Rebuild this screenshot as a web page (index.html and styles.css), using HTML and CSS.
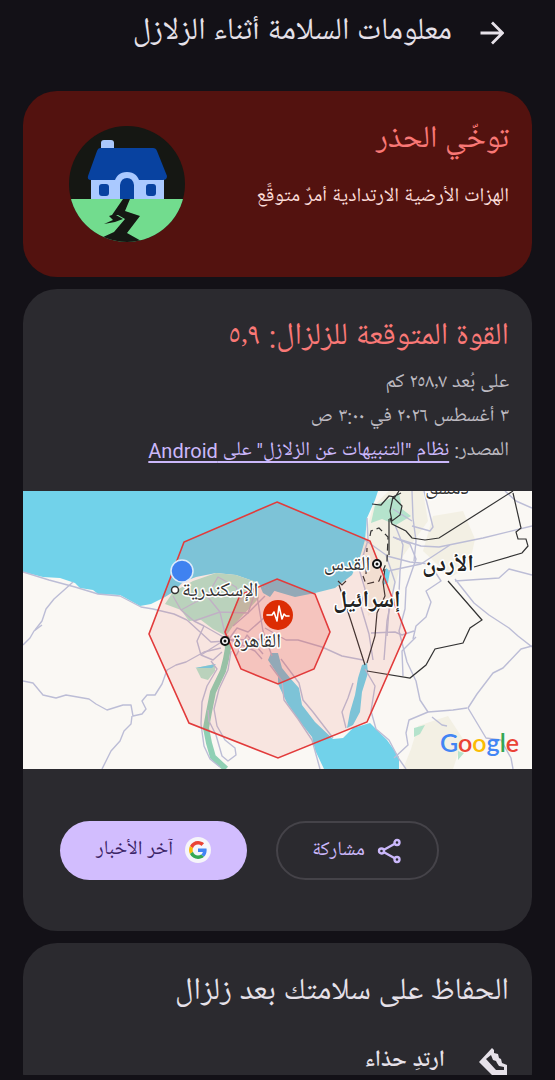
FILE: index.html
```
<!DOCTYPE html>
<html lang="ar" dir="rtl">
<head>
    <meta charset="UTF-8">
    <meta name="viewport" content="width=device-width, initial-scale=1.0">
    <title>معلومات السلامة أثناء الزلازل</title>
    <link rel="stylesheet" href="styles.css">
</head>
<body>
    <header class="top-bar">
        <button class="back-button" aria-label="رجوع">
            <svg width="24" height="24" viewBox="0 0 24 24" fill="none" stroke="currentColor" stroke-width="2.8"><path d="M0.500 12H22M12 1.500L22.500 12L12 22.500"/></svg>
        </button>
        <h1>معلومات السلامة أثناء الزلازل</h1>
    </header>

    <main class="content">
        <section class="card warning">
            <div class="warning-text">
                <h2>توخّي الحذر</h2>
                <p>الهزات الأرضية الارتدادية أمرٌ متوقَّع</p>
            </div>
            <svg class="house" viewBox="0 0 116 116">
                <clipPath id="round"><circle cx="58" cy="58" r="58"/></clipPath>
                <g clip-path="url(#round)">
                    <rect width="116" height="116" fill="#151713"/>
                    <rect y="73" width="116" height="43" fill="#72dc8e"/>
                    <path d="M54 73L43 89L40 90L44 94L35 98L46 96L54 93L47 89L49 89L56 93L45 106L32 112V116H74L58 107L71 90L56 85L61 73Z" fill="#151713"/>
                    <rect x="32" y="14" width="13" height="14" rx="3" fill="#aac7fb"/>
                    <rect x="22" y="50" width="73" height="23" fill="#aac9ff"/>
                    <path d="M31 22H84Q87 22 88 25L98 50Q98 54 94 54H22Q18 54 19 50L28 25Q29 22 31 22Z" fill="#0842a0"/>
                    <path d="M45 73V58Q47 46 58 46Q69 46 71 58V73Z" fill="#aac9ff"/>
                    <path d="M51 73V59Q52 52 58 52Q64 52 65 59V73Z" fill="#0842a0"/>
                    <rect x="30" y="58" width="10" height="12" rx="3" fill="#0842a0"/>
                    <rect x="77" y="58" width="10" height="12" rx="3" fill="#0842a0"/>
                </g>
            </svg>
        </section>

        <section class="card quake">
            <div class="details">
                <h2>القوة المتوقعة للزلزال: ٥٫٩</h2>
                <p>على بُعد ٢٥٨٫٧ كم</p>
                <p>٣ أغسطس ٢٠٢٦ في ٣:٠٠ ص</p>
                <p>المصدر: <a href="#">نظام "التنبيهات عن الزلازل" على Android</a></p>
            </div>

            <svg class="map" viewBox="0 0 509 278">
                <rect width="509" height="278" fill="#faf8f4"/>
                <!-- terrain -->
                <path class="sand" d="M410 25L440 20L452 48L446 76L428 86L400 60ZM395 235L425 225L440 248L430 278H380L388 258Z"/>
                <path class="sand" d="M338 60L350 15L366 0H400L405 30L380 65L368 110L345 125Z"/>
                <!-- sea -->
                <path class="sea" d="M0 0V81L20 86L37 87L52 92L57 97L70 99L75 103L97 104L117 115L128 113L142 106L150 101L160 91L173 86L193 82L213 84L233 91L240 96L255 101L272 106L292 102L312 97L329 84L337 66L342 49L344 27L352 9L355 0Z"/>
                <!-- farmland along the Nile -->
                <path class="green" d="M142 113L150 101L170 90L193 82L213 84L233 91L236 107L221 123L210 135L203 145L190 138L178 129L166 130L158 119Z"/>
                <path class="green" d="M173 177L192 173V180L185 189L178 187Z"/>
                <path class="green" d="M352 14L366 8L376 2L379 18L388 25L373 34L359 28L348 32ZM391 237L402 234L397 243L391 246ZM435 260L441 262L435 269Z"/>
                <path class="river" d="M203 145L205 157L203 168L200 180L190 201L186 221L183 237L186 252L190 266L203 278"/>
                <path class="lake" d="M172 177L193 173L189 177Z"/>
                <path class="lake" d="M237 95L252 99L247 106L240 102Z"/>
                <!-- gulfs -->
                <path class="sea" d="M248 162L245 169L255 184L255 193L264 212L277 231L289 246L292 259L301 278H376V266L364 249L347 232L330 237L320 247L310 248L292 231L279 214L276 197L267 187L259 177L255 162Z"/>
                <path class="sea" d="M344 172L345 182L339 201L337 221L330 234L324 237L327 221L332 204L335 187L339 174ZM363 77L367 80L365 92L360 94Z"/>

                <!-- roads -->
                <g class="roads">
                    <path d="M0 81L26 89L52 96L75 103L97 105L118 116L130 118L151 123L164 129"/>
                    <path d="M12 139L19 130L23 118L31 108L40 100L50 91"/>
                    <path d="M0 154L7 147L11 140L19 134"/>
                    <path d="M0 190L10 192L20 204L33 207L43 204L66 208L73 213L84 219L100 214L108 214L110 225L119 223L123 218L119 210L124 204L132 204L139 193L144 179L153 174L163 171L181 161L198 157"/>
                    <path d="M109 225L108 233L101 240L97 250L88 260L79 278"/>
                    <path d="M150 105L158 119L171 130L181 135L202 147M164 129L188 151L203 150"/>
                    <path d="M181 135L174 150L178 164L190 169L199 161M178 164L200 150"/>
                    <path d="M188 170L194 178L184 195L179 211L178 233L181 255L187 268L197 276"/>
                    <path d="M208 160L205 179L196 198L191 218L194 235L202 249L212 257L213 264L205 270L199 265L193 244L186 230L185 219"/>
                    <path d="M158 119L184 105L195 86L213 96L218 108M184 105L197 121L225 122L242 105M171 130L197 121L203 147"/>
                    <path d="M206 148L214 137L225 141L242 126L252 111M210 135L225 122L233 99L240 140L249 165M206 148L232 160L239 168M207 149L250 148"/>
                    <path d="M213 165L224 144L240 163M242 137L263 149L275 149L299 156L319 165L340 169"/>
                    <path d="M247 174L259 190L261 209L275 228L289 249L297 278M258 168L276 192L280 209L290 221L310 247"/>
                    <path d="M342 178L352 195L348 220L353 238L366 249L376 268L383 278M323 237L319 221L325 207L330 192"/>
                    <path d="M344 27L345 49L336 78L342 98L338 116L346 143L350 169M342 49L363 64L372 91L364 130L361 169"/>
                    <path d="M372 34L380 54L377 80L376 102L366 118L364 145M370 46L387 53L393 68L383 97L382 118L376 140L384 171L393 190L397 209L405 221L430 219L444 217"/>
                    <path d="M364 65L387 71L407 73L418 90L403 100L408 111L403 126L393 135L390 148"/>
                    <path d="M372 47L398 55L416 56L460 47L509 35M365 80L398 73L427 54"/>
                    <path d="M389 0L390 27L393 50L391 70M401 0L410 36L407 40L389 35M370 18L389 30"/>
                    <path d="M432 88L451 112L466 124L486 137L495 145L509 156M432 90L476 87L486 78L509 84"/>
                    <path d="M509 155L498 158L480 177L470 182L454 203L445 217L463 247L478 249L488 267L490 278"/>
                    <path d="M405 221L386 229L383 242L385 254L371 267M409 226L419 234L424 235"/>
                    <path d="M348 142L372 141L379 144L391 140M482 0L493 10L509 17M380 185L379 160L393 146"/>
                </g>

                <!-- borders -->
                <g class="borders">
                    <path d="M349 13L358 14L366 5L372 6L376 0M370 6L379 15L377 24L369 30L367 20L370 6L378 2M367 27L369 33L383 40L389 47L402 49L416 47L490 0M490 2L498 37L493 41L495 48L503 48L505 55L499 62L451 76"/>
                    <path d="M425 90L459 129L447 137L440 152L412 158L403 174L387 187L344 180M316 94L319 103L328 130L342 174M366 28L366 64"/>
                    <path d="M362 78L360 91L362 105L354 122L352 145L344 172"/>
                    <path stroke-dasharray="7 4" d="M347 45L348 40L356 37L365 46L364 70L356 90L343 93L340 85M343 83L344 57"/>
                    <path d="M315 90L319 94L323 90"/>
                </g>

                <!-- shaking zones -->
                <path class="zone" d="M254 11L347 50L383 142L344 231L255 267L166 232L126 143L161 51Z"/>
                <path class="zone zone-inner" d="M254 88L292 103L307 141L291 178L255 193L218 178L202 141L217 104Z"/>

                <!-- places -->
                <text class="city" x="424" y="6">دمشق</text>
                <text class="country" x="425" y="83">الأردن</text>
                <text class="country" x="344" y="119">إسرائيل</text>
                <text class="city" x="324" y="82">القدس</text>
                <text class="city" x="197" y="108">الإسكندرية</text>
                <text class="city" x="234" y="159">القاهرة</text>
                <circle cx="152" cy="99" r="3.500" fill="#fff" stroke="#333" stroke-width="1.500"/>
                <circle cx="202" cy="150" r="4" fill="#fff" stroke="#111" stroke-width="2"/>
                <circle cx="202" cy="150" r="1.500" fill="#111"/>
                <circle cx="354" cy="73" r="4" fill="#fff" stroke="#111" stroke-width="2"/>
                <circle cx="354" cy="73" r="1.500" fill="#111"/>

                <circle cx="159" cy="80" r="11" fill="#3f82f0" stroke="#dcebfb" stroke-width="1.500"/>

                <circle cx="255" cy="124" r="15" fill="#dc2c04"/>
                <path d="M244 124H249L251 121L254 130L256 115L259 128L261 123L263 125H266" fill="none" stroke="#fff" stroke-width="1.600" stroke-linejoin="round" stroke-linecap="round"/>

                <text class="google" x="417" y="261"><tspan fill="#4285f4">G</tspan><tspan fill="#ea4335">o</tspan><tspan fill="#fbbc05">o</tspan><tspan fill="#4285f4">g</tspan><tspan fill="#34a853">l</tspan><tspan fill="#ea4335">e</tspan></text>
            </svg>

            <div class="actions">
                <button class="share">
                    <svg width="26" height="26" viewBox="0 0 26 26" fill="none" stroke="currentColor" stroke-width="2.400"><circle cx="4.500" cy="13" r="2.500"/><circle cx="20" cy="4.500" r="2.500"/><circle cx="20" cy="21.500" r="2.500"/><path d="M7 11.700L17.800 5.800M7 14.300L17.800 20.200"/></svg>
                    مشاركة
                </button>
                <button class="news">
                    <svg width="26" height="26" viewBox="0 0 26 26">
                        <circle cx="13" cy="13" r="13" fill="#f6f5fa"/>
                        <g transform="translate(4 4) scale(.375)">
                            <path fill="#ea4335" d="M24 9.500c3.540 0 6.710 1.220 9.210 3.600l6.850-6.850C35.900 2.380 30.470 0 24 0 14.620 0 6.510 5.380 2.560 13.220l7.980 6.190C12.430 13.720 17.740 9.500 24 9.500z"/>
                            <path fill="#4285f4" d="M46.980 24.550c0-1.570-.15-3.090-.38-4.550H24v9.020h12.940c-.58 2.960-2.260 5.480-4.780 7.180l7.730 6c4.510-4.180 7.090-10.360 7.090-17.650z"/>
                            <path fill="#fbbc05" d="M10.530 28.590c-.48-1.450-.76-2.990-.76-4.590s.27-3.140.76-4.590l-7.980-6.190C.92 16.460 0 20.120 0 24c0 3.880.92 7.540 2.560 10.780l7.970-6.190z"/>
                            <path fill="#34a853" d="M24 48c6.480 0 11.930-2.130 15.890-5.810l-7.730-6c-2.150 1.450-4.920 2.300-8.160 2.300-6.260 0-11.570-4.220-13.470-9.910l-7.980 6.190C6.510 42.620 14.620 48 24 48z"/>
                        </g>
                    </svg>
                    آخر الأخبار
                </button>
            </div>
        </section>

        <section class="card safety">
            <h2>الحفاظ على سلامتك بعد زلزال</h2>
            <ul>
                <li>
                    <svg width="28" height="28" viewBox="0 0 28 28"><path fill="currentColor" fill-rule="evenodd" d="M13 0L15 2V5L19 6L20 10L22 11L23 15L28 17V28H14L0 14ZM7 11L17 22H25V19L20 18L18 15L17 13L14 12L12 7Z"/></svg>
                    ارتدِ حذاء
                </li>
            </ul>
        </section>
    </main>
</body>
</html>
```
FILE: styles.css
```
*,
*::before,
*::after {
    box-sizing: border-box;
}

:root {
    --clr-page: #131117;
    --clr-card: #2b2a2f;
    --clr-warning: #53120f;
    --clr-red: #f97876;
    --clr-text: #e6e1e9;
    --clr-muted: #bdbac1;
    --clr-purple: #cbb8fb;

    --ff-body: Roboto, "Noto Naskh Arabic UI", "Noto Naskh Arabic", "Noto Sans Arabic", sans-serif;
}

body {
    display: flex;
    flex-direction: column;
    height: 100vh;
    margin: 0;
    padding: 0 23px 5px;
    overflow: hidden;
    background: var(--clr-page);
    color: var(--clr-text);
    font-family: var(--ff-body);
}

h1,
h2,
p,
ul {
    margin: 0;
    padding: 0;
}

h1,
h2 {
    font-weight: 400;
    font-size: 31px;
    line-height: 44px;
}

button {
    font-family: inherit;
    cursor: pointer;
}

.top-bar {
    display: flex;
    flex-shrink: 0;
    align-items: center;
    gap: 28px;
    height: 91px;
    padding: 0 28px 25px;
}

.back-button {
    display: flex;
    padding: 0;
    border: none;
    background: transparent;
    color: var(--clr-text);
}

.content {
    display: flex;
    flex: 1;
    flex-direction: column;
    gap: 12px;
    min-height: 0;
    overflow: hidden;
}

.card {
    flex-shrink: 0;
    border-radius: 34px;
    background: var(--clr-card);
}

.warning {
    display: flex;
    justify-content: space-between;
    align-items: center;
    height: 186px;
    padding: 0 23px 0 46px;
    background: var(--clr-warning);
}

.warning-text {
    align-self: flex-start;
    padding-top: 28px;
}

.warning h2,
.quake h2 {
    color: var(--clr-red);
}

.warning p {
    margin-top: 17px;
    color: #fbdcd8;
    font-size: 20px;
    line-height: 34px;
}

.house {
    width: 116px;
    height: 116px;
}

.details {
    padding: 27px 23px 23px;
    color: var(--clr-muted);
    font-size: 20px;
    line-height: 34px;
}

.details h2 {
    margin-bottom: 6px;
}

.details a {
    color: var(--clr-purple);
    text-decoration-thickness: 2px;
    text-underline-offset: 3px;
    text-decoration-skip-ink: none;
}

.map {
    display: block;
    width: 100%;
}

.sand { fill: #f3f0e4; }
.sea { fill: #71d2ea; }
.lake { fill: #71d2ea; }
.green { fill: #b5e3cc; }

.river {
    fill: none;
    stroke: #8fd0b4;
    stroke-width: 6;
}

.roads {
    fill: none;
    stroke: #bcbdd6;
    stroke-width: 1.4;
    stroke-linejoin: round;
}

.borders {
    fill: none;
    stroke: #333;
    stroke-width: 1.2;
}

.zone {
    fill: rgba(233, 67, 53, 0.1);
    stroke: #e23b3b;
    stroke-width: 1.6;
}

.zone-inner {
    fill: rgba(233, 67, 53, 0.2);
}

.map text {
    fill: #333;
    stroke: #fff;
    stroke-width: 3;
    stroke-linejoin: round;
    paint-order: stroke;
    text-anchor: middle;
    font-size: 20px;
}

.map .country {
    fill: #222;
    font-weight: 700;
    font-size: 23px;
}

.map .google {
    direction: ltr;
    stroke: none;
    text-anchor: start;
    font-family: Lato, sans-serif;
    font-weight: 600;
    font-size: 25px;
}

.actions {
    display: flex;
    justify-content: flex-end;
    gap: 29px;
    padding: 52px 37px 51px;
}

.actions button {
    display: flex;
    justify-content: center;
    align-items: center;
    gap: 12px;
    height: 59px;
    padding: 0 36px 2px;
    border: none;
    border-radius: 30px;
    font-size: 20px;
}

.actions .share {
    padding: 0 34px;
    border: 2px solid #454349;
    background: transparent;
    color: var(--clr-purple);
}

.actions .news {
    background: #d2bdfe;
    color: #3b2466;
}

.safety {
    padding: 28px 23px;
}

.safety ul {
    margin-top: 31px;
    list-style: none;
}

.safety li {
    display: flex;
    align-items: center;
    gap: 34px;
    padding: 0 2px;
    font-weight: 600;
    font-size: 23px;
    line-height: 32px;
}
```
